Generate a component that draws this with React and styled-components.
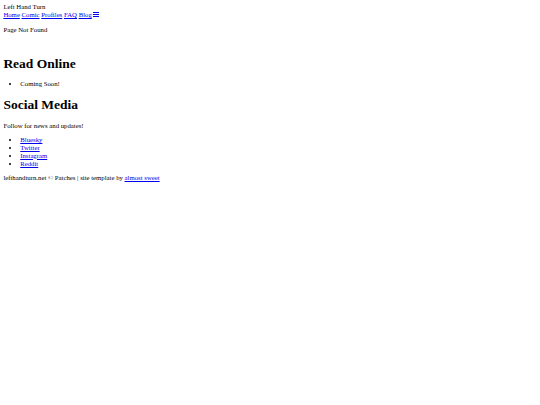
import styled, { createGlobalStyle } from 'styled-components'

const Global = createGlobalStyle`
body {
  margin: 3.375px;
  font-family: "Liberation Serif", "Times New Roman", serif;
  font-size: 6.75px;
  line-height: 7.76px;
  color: #000;
  background: #fff;
}
a { color: #0000ee; }
`

const Header = styled.header``

const Title = styled.div``

const Nav = styled.nav``

const Menu = styled.svg`
width: 6px;
height: 5px;
margin-left: 1.5px;
vertical-align: 0;
`

const Para = styled.p`
margin: 6.75px 0;
`

const Heading = styled.h1`
font-size: 13.5px;
line-height: 15.5px;
font-weight: bold;
margin: 9px 0;
`

const Spacer = styled.div`
height: 6.8px;
`

const List = styled.ul`
margin: 6.75px 0;
padding-left: 16.875px;
`

const Footer = styled.footer``

const App = () => {
  return (
    <>
      <Global />
      <Header>
        <Title>Left Hand Turn</Title>
        <Nav>
          <a href="#">Home</a> <a href="#">Comic</a> <a href="#">Profiles</a>{' '}
          <a href="#">FAQ</a> <a href="#">Blog</a>
          <Menu viewBox="0 0 6 5" shapeRendering="crispEdges">
            <rect x="0" y="0" width="6" height="1" fill="#0000ee" />
            <rect x="0" y="2" width="6" height="1" fill="#0000ee" />
            <rect x="0" y="4" width="6" height="1" fill="#0000ee" />
          </Menu>
        </Nav>
      </Header>
      <main>
        <Para>Page Not Found</Para>
        <Spacer />
        <Heading>Read Online</Heading>
        <List>
          <li>Coming Soon!</li>
        </List>
        <Heading>Social Media</Heading>
        <Para>Follow for news and updates!</Para>
        <List>
          <li><a href="#">Bluesky</a></li>
          <li><a href="#">Twitter</a></li>
          <li><a href="#">Instagram</a></li>
          <li><a href="#">Reddit</a></li>
        </List>
      </main>
      <Footer>lefthandturn.net © Patches | site template by <a href="#">almost sweet</a></Footer>
    </>
  )
}

export default App
